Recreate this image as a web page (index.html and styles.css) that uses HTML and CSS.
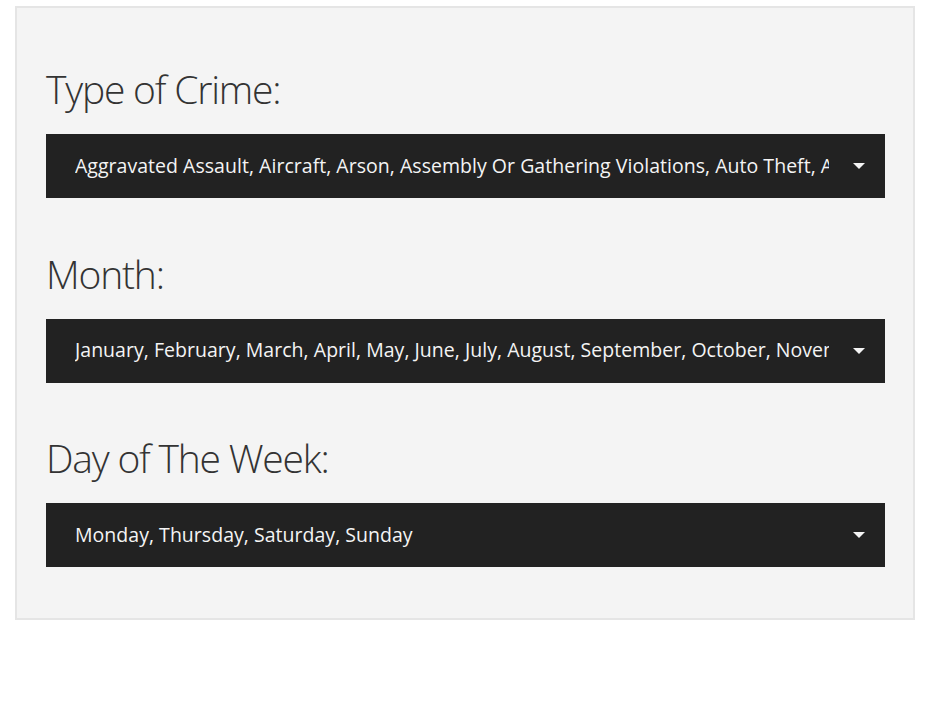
FILE: index.html
```html
<!DOCTYPE html>
<html lang="en">
<head>
<meta charset="utf-8">
<title>Filters</title>
<link rel="stylesheet" href="styles.css">
</head>
<body>
<div class="panel">
  <div class="group">
    <label class="label">Type of Crime:</label>
    <div class="select">
      <span class="value">Aggravated Assault, Aircraft, Arson, Assembly Or Gathering Violations, Auto Theft, Auto Theft Recovery, Burglary</span>
      <span class="caret"></span>
    </div>
  </div>
  <div class="group">
    <label class="label">Month:</label>
    <div class="select">
      <span class="value">January, February, March, April, May, June, July, August, September, October, November, December</span>
      <span class="caret"></span>
    </div>
  </div>
  <div class="group">
    <label class="label">Day of The Week:</label>
    <div class="select">
      <span class="value">Monday, Thursday, Saturday, Sunday</span>
      <span class="caret"></span>
    </div>
  </div>
</div>
</body>
</html>
```

FILE: styles.css
```css
* { box-sizing: border-box; }
html, body { margin: 0; padding: 0; background: #ffffff; }
body { font-family: "Open Sans", "Liberation Sans", sans-serif; }

.panel {
  width: 900px;
  margin: 6px 0 0 15px;
  border: 2px solid #e5e5e5;
  background: #f4f4f4;
  padding: 57px 28px 51px 29px;
}

.group + .group { margin-top: 51.5px; }

.label {
  display: block;
  font-weight: 300;
  font-size: 39px;
  line-height: 48px;
  color: #333333;
  margin: 0 0 21px 0;
  letter-spacing: -1.2px;
}

.select {
  display: flex;
  align-items: center;
  height: 64px;
  background: #222222;
  color: #f4f4f4;
  padding: 0 20px 0 29px;
}

.value {
  flex: 1;
  min-width: 0;
  overflow: hidden;
  white-space: nowrap;
  font-size: 19.5px;
  letter-spacing: 0.03px;
  margin: 0 24px 2px 0;
}

.caret {
  flex: none;
  width: 0;
  height: 0;
  border-left: 6px solid transparent;
  border-right: 6px solid transparent;
  border-top: 6px solid #f4f4f4;
}
```
